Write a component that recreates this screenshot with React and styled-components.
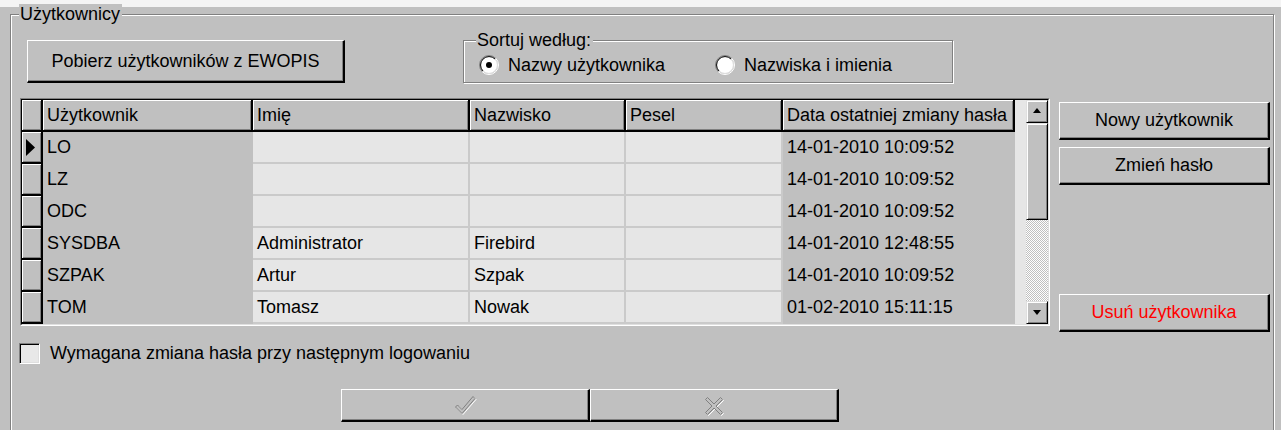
import React from 'react';
import styled, { createGlobalStyle } from 'styled-components';

const GlobalStyle = createGlobalStyle`
  html, body {
    margin: 0;
    padding: 0;
  }
  body {
    height: 430px;
    overflow: hidden;
    background: linear-gradient(#f4f4f4 0 7px, #c0c0c0 7px);
    font-family: "Liberation Sans", Arial, sans-serif;
    font-size: 18px;
    color: #000;
  }
`;

const Page = styled.div`
  padding-top: 4px;
`;

const Group = styled.fieldset`
  margin: 0;
  padding: 0;
  min-width: 0;
  border: 1px solid #808080;
  box-shadow: 1px 1px 0 #fff, inset 1px 1px 0 #fff;
`;

const MainGroup = styled(Group)`
  margin: 0 7px 0 10px;
  padding-bottom: 24px;
`;

const SortGroup = styled(Group)`
  width: 488px;
  margin-left: 118px;
  padding: 3px 0 6px 0;
`;

const GroupTitle = styled.legend`
  margin-left: ${p => p.$indent}px;
  padding: 0 2px 0 1px;
  line-height: 21px;
  background: #c0c0c0;
`;

const Button = styled.button`
  display: flex;
  align-items: center;
  justify-content: center;
  box-sizing: border-box;
  padding: 0;
  font: inherit;
  color: ${p => (p.$danger ? '#ff0000' : '#000')};
  background: #c0c0c0;
  border-style: solid;
  border-width: 1px 2px 2px 1px;
  border-color: #fff #000 #000 #fff;
  box-shadow: inset -1px -1px 0 #808080;
  cursor: default;
`;

const FetchButton = styled(Button)`
  width: 318px;
  height: 43px;
  margin: 10px 0 0 16px;
`;

const SideButton = styled(Button)`
  width: 211px;
  height: 38px;
  margin-top: ${p => p.$gap || 0}px;
`;

const DialogButton = styled(Button)`
  width: 249px;
  height: 33px;
`;

const TopRow = styled.div`
  display: flex;
  align-items: flex-start;
  padding-top: 5px;
`;

const RadioRow = styled.div`
  display: flex;
  align-items: center;
  height: 22px;
  margin-left: 15px;
`;

const RadioOption = styled.label`
  display: flex;
  align-items: center;
  gap: 9px;
  width: ${p => p.$width || 'auto'};
`;

const MainRow = styled.div`
  display: flex;
  align-items: flex-start;
  margin-top: 15px;
`;

const GridFrame = styled.div`
  margin-left: 9px;
  border: 1px solid;
  border-color: #808080 #fff #fff #808080;
`;

const GridInner = styled.div`
  display: flex;
  border: 1px solid;
  border-color: #000 #dfdfdf #dfdfdf #000;
`;

const GridBody = styled.div`
  display: flex;
  flex-direction: column;
`;

const Row = styled.div`
  display: grid;
  grid-template-columns: 21px 210px 217px 156px 157px 232px;
  height: 32px;
`;

const HeaderCell = styled.div`
  box-sizing: border-box;
  display: flex;
  align-items: center;
  padding-left: 4px;
  white-space: nowrap;
  overflow: hidden;
  background: #c0c0c0;
  border-right: 2px solid #000;
  border-bottom: 2px solid #000;
  box-shadow: inset 1px 1px 0 #fff, inset -1px -1px 0 #808080;
`;

const IndicatorCell = styled(HeaderCell)`
  padding-left: 4px;
`;

const Cell = styled.div`
  box-sizing: border-box;
  display: flex;
  align-items: center;
  padding-left: 4px;
  white-space: nowrap;
  overflow: hidden;
  background: ${p => (p.$light ? '#e6e6e6' : '#c0c0c0')};
  border-right: 2px solid ${p => (p.$light ? '#cacaca' : '#c0c0c0')};
  border-bottom: 2px solid ${p => (p.$light ? '#cacaca' : '#c0c0c0')};
`;

const Filler = styled.div`
  width: 11px;
  background: #e6e6e6;
`;

const ScrollBar = styled.div`
  display: flex;
  flex-direction: column;
  width: 22px;
  height: 224px;
`;

const ScrollButton = styled.div`
  box-sizing: border-box;
  display: flex;
  justify-content: center;
  align-items: ${p => (p.$down ? 'flex-end' : 'flex-start')};
  padding: ${p => (p.$down ? '0 0 8px' : '7px 0 0')};
  height: ${p => p.$height}px;
  background: #c0c0c0;
  border: 1px solid;
  border-color: #dfdfdf #000 #000 #dfdfdf;
  box-shadow: inset 1px 1px 0 #fff, inset -1px -1px 0 #808080;
`;

const Track = styled.div`
  flex: 1;
  background: repeating-conic-gradient(#fff 0 25%, #c0c0c0 0 50%) 0 0 / 2px 2px;
`;

const SideColumn = styled.div`
  display: flex;
  flex-direction: column;
  margin-left: 9px;
  padding-top: 4px;
`;

const CheckRow = styled.label`
  display: flex;
  align-items: center;
  gap: 10px;
  height: 21px;
  margin: 11px 0 0 8px;
`;

const CheckBox = styled.span`
  box-sizing: border-box;
  width: 21px;
  height: 21px;
  border: 1px solid;
  border-color: #808080 #fff #fff #808080;
  box-shadow: inset 1px 1px 0 #000, inset -1px -1px 0 #dfdfdf;
  background: #e8e8e8;
`;

const DialogBar = styled.div`
  display: flex;
  margin: 25px 0 0 330px;
`;

const RadioMark = ({ checked }) => (
  <svg width="20" height="20" viewBox="0 0 20 20">
    <circle cx="10" cy="10" r="8.5" fill="#fff" />
    <path d="M3.28 16.72 A9.5 9.5 0 0 1 16.72 3.28" stroke="#808080" fill="none" />
    <path d="M16.72 3.28 A9.5 9.5 0 0 1 3.28 16.72" stroke="#fff" fill="none" />
    <path d="M3.99 16.01 A8.5 8.5 0 0 1 16.01 3.99" stroke="#000" fill="none" />
    <path d="M16.01 3.99 A8.5 8.5 0 0 1 3.99 16.01" stroke="#dfdfdf" fill="none" />
    {checked && <circle cx="10" cy="10" r="3" fill="#000" />}
  </svg>
);

const RowPointer = () => (
  <svg width="9" height="17" viewBox="0 0 9 17">
    <polygon points="0,0 9,8.5 0,17" fill="#000" />
  </svg>
);

const ScrollArrow = ({ down }) => (
  <svg width="8" height="5" viewBox="0 0 8 5">
    <polygon points={down ? '0,0 8,0 4,5' : '4,0 8,5 0,5'} fill="#000" />
  </svg>
);

// grayed-out glyph: white copy shifted by one pixel under a gray outline
const DisabledGlyph = ({ points }) => (
  <svg width="23" height="21" viewBox="0 0 23 21">
    <polygon points={points} transform="translate(1 1)" fill="none" stroke="#fff" />
    <polygon points={points} fill="#c0c0c0" stroke="#808080" />
  </svg>
);

const CHECK_POINTS = '1.5,12 3.5,10 8,14.5 19,1.5 21,3.5 8,18.5';
const CROSS_POINTS = '2.5,4.5 4.5,2.5 11,9 17.5,2.5 19.5,4.5 13,11 19.5,17.5 17.5,19.5 11,13 4.5,19.5 2.5,17.5 9,11';

const columns = ['Użytkownik', 'Imię', 'Nazwisko', 'Pesel', 'Data ostatniej zmiany hasła'];
const lightColumns = [false, true, true, true, false];

const users = [
  ['LO', '', '', '', '14-01-2010 10:09:52'],
  ['LZ', '', '', '', '14-01-2010 10:09:52'],
  ['ODC', '', '', '', '14-01-2010 10:09:52'],
  ['SYSDBA', 'Administrator', 'Firebird', '', '14-01-2010 12:48:55'],
  ['SZPAK', 'Artur', 'Szpak', '', '14-01-2010 10:09:52'],
  ['TOM', 'Tomasz', 'Nowak', '', '01-02-2010 15:11:15'],
];

export default function App() {
  const current = 0;

  return (
    <Page>
      <GlobalStyle />
      <MainGroup>
        <GroupTitle $indent={8}>Użytkownicy</GroupTitle>

        <TopRow>
          <FetchButton>Pobierz użytkowników z EWOPIS</FetchButton>
          <SortGroup>
            <GroupTitle $indent={12}>Sortuj według:</GroupTitle>
            <RadioRow>
              <RadioOption $width="236px">
                <RadioMark checked />
                Nazwy użytkownika
              </RadioOption>
              <RadioOption>
                <RadioMark />
                Nazwiska i imienia
              </RadioOption>
            </RadioRow>
          </SortGroup>
        </TopRow>

        <MainRow>
          <GridFrame>
            <GridInner>
              <GridBody>
                <Row>
                  <IndicatorCell />
                  {columns.map(title => (
                    <HeaderCell key={title}>{title}</HeaderCell>
                  ))}
                </Row>
                {users.map((user, i) => (
                  <Row key={user[0]}>
                    <IndicatorCell>{i === current && <RowPointer />}</IndicatorCell>
                    {user.map((value, c) => (
                      <Cell key={c} $light={lightColumns[c]}>{value}</Cell>
                    ))}
                  </Row>
                ))}
              </GridBody>
              <Filler />
              <ScrollBar>
                <ScrollButton $height={23}>
                  <ScrollArrow />
                </ScrollButton>
                <ScrollButton $height={97} />
                <Track />
                <ScrollButton $height={23} $down>
                  <ScrollArrow down />
                </ScrollButton>
              </ScrollBar>
            </GridInner>
          </GridFrame>

          <SideColumn>
            <SideButton>Nowy użytkownik</SideButton>
            <SideButton $gap={7}>Zmień hasło</SideButton>
            <SideButton $gap={109} $danger>Usuń użytkownika</SideButton>
          </SideColumn>
        </MainRow>

        <CheckRow>
          <CheckBox />
          Wymagana zmiana hasła przy następnym logowaniu
        </CheckRow>

        <DialogBar>
          <DialogButton disabled>
            <DisabledGlyph points={CHECK_POINTS} />
          </DialogButton>
          <DialogButton disabled>
            <DisabledGlyph points={CROSS_POINTS} />
          </DialogButton>
        </DialogBar>
      </MainGroup>
    </Page>
  );
}
